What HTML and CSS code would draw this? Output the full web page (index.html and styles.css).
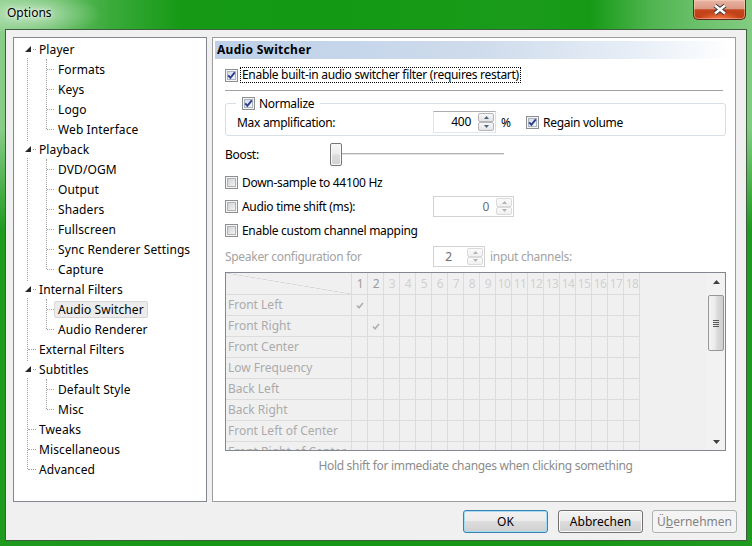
FILE: index.html
```html
<!DOCTYPE html>
<html lang="en">
<head>
<meta charset="utf-8">
<title>Options</title>
<link rel="stylesheet" href="styles.css">
</head>
<body>
<div class="window">
  <div class="titlebar">
    <div class="title">Options</div>
    <div class="close">
      <svg width="16" height="13" viewBox="0 0 16 13"><path d="M3 2.5 L13 10.5 M13 2.5 L3 10.5" stroke="#3d3d3d" stroke-width="4.4"/><path d="M3 2.5 L13 10.5 M13 2.5 L3 10.5" stroke="#ffffff" stroke-width="2.4"/></svg>
    </div>
  </div>
  <div class="client">
    <div class="panels">
      <div class="tree">
        <div class="roots">
          <div class="node">
            <div class="row root"><span class="exp"><svg width="6" height="6" viewBox="0 0 6 6"><path d="M6 0V6H0Z" fill="#262626"/></svg></span><span class="label">Player</span></div>
            <div class="kids">
              <div class="row kid"><span class="label">Formats</span></div>
              <div class="row kid"><span class="label">Keys</span></div>
              <div class="row kid"><span class="label">Logo</span></div>
              <div class="row kid"><span class="label">Web Interface</span></div>
            </div>
          </div>
          <div class="node">
            <div class="row root"><span class="exp"><svg width="6" height="6" viewBox="0 0 6 6"><path d="M6 0V6H0Z" fill="#262626"/></svg></span><span class="label">Playback</span></div>
            <div class="kids">
              <div class="row kid"><span class="label">DVD/OGM</span></div>
              <div class="row kid"><span class="label">Output</span></div>
              <div class="row kid"><span class="label">Shaders</span></div>
              <div class="row kid"><span class="label">Fullscreen</span></div>
              <div class="row kid"><span class="label">Sync Renderer Settings</span></div>
              <div class="row kid"><span class="label">Capture</span></div>
            </div>
          </div>
          <div class="node">
            <div class="row root"><span class="exp"><svg width="6" height="6" viewBox="0 0 6 6"><path d="M6 0V6H0Z" fill="#262626"/></svg></span><span class="label">Internal Filters</span></div>
            <div class="kids">
              <div class="row kid"><span class="label sel">Audio Switcher</span></div>
              <div class="row kid"><span class="label">Audio Renderer</span></div>
            </div>
          </div>
          <div class="row root"><span class="label">External Filters</span></div>
          <div class="node">
            <div class="row root"><span class="exp"><svg width="6" height="6" viewBox="0 0 6 6"><path d="M6 0V6H0Z" fill="#262626"/></svg></span><span class="label">Subtitles</span></div>
            <div class="kids">
              <div class="row kid"><span class="label">Default Style</span></div>
              <div class="row kid"><span class="label">Misc</span></div>
            </div>
          </div>
          <div class="row root"><span class="label">Tweaks</span></div>
          <div class="row root"><span class="label">Miscellaneous</span></div>
          <div class="row root"><span class="label">Advanced</span></div>
        </div>
      </div>

      <div class="panel">
        <div class="hdr">Audio Switcher</div>
        <div class="content">
          <div class="line r-enable">
            <span class="cb on fc"><svg width="13" height="13" viewBox="0 0 13 13"><path d="M3.2 6.3 L5.4 8.8 L9.8 3.4" fill="none" stroke="#2a3f8f" stroke-width="1.9"/></svg></span>
            <span class="focus">Enable built-in audio switcher filter (requires restart)</span>
          </div>
          <div class="sep"></div>
          <div class="group">
            <div class="legend">
              <span class="cb on"><svg width="13" height="13" viewBox="0 0 13 13"><path d="M3.2 6.3 L5.4 8.8 L9.8 3.4" fill="none" stroke="#2a3f8f" stroke-width="1.9"/></svg></span>
              <span>Normalize</span>
            </div>
            <div class="line h22">
              <span class="amp-lbl">Max amplification:</span>
              <div class="spin w63">
                <span class="val">400</span>
                <span class="sbtns">
                  <span class="sbtn"><svg width="5" height="3" viewBox="0 0 5 3"><path d="M0 3H5L2.5 0Z" fill="#4e5f83"/></svg></span>
                  <span class="sbtn"><svg width="5" height="3" viewBox="0 0 5 3"><path d="M0 0H5L2.5 3Z" fill="#4e5f83"/></svg></span>
                </span>
              </div>
              <span class="pct">%</span>
              <span class="cb on"><svg width="13" height="13" viewBox="0 0 13 13"><path d="M3.2 6.3 L5.4 8.8 L9.8 3.4" fill="none" stroke="#2a3f8f" stroke-width="1.9"/></svg></span>
              <span>Regain volume</span>
            </div>
          </div>
          <div class="line boost">
            <span class="boost-lbl">Boost:</span>
            <div class="slider"><span class="thumb"></span></div>
          </div>
          <div class="line r-down">
            <span class="cb"></span><span>Down-sample to 44100 Hz</span>
          </div>
          <div class="line r-shift">
            <span class="lbl208"><span class="cb"></span><span>Audio time shift (ms):</span></span>
            <div class="spin dis w81">
              <span class="val">0</span>
              <span class="sbtns">
                <span class="sbtn"><svg width="5" height="3" viewBox="0 0 5 3"><path d="M0 3H5L2.5 0Z" fill="#b3b3b3"/></svg></span>
                <span class="sbtn"><svg width="5" height="3" viewBox="0 0 5 3"><path d="M0 0H5L2.5 3Z" fill="#b3b3b3"/></svg></span>
              </span>
            </div>
          </div>
          <div class="line r-custom">
            <span class="cb"></span><span>Enable custom channel mapping</span>
          </div>
          <div class="line r-speaker">
            <span class="lbl208 grey">Speaker configuration for</span>
            <div class="spin dis w52 center">
              <span class="val">2</span>
              <span class="sbtns">
                <span class="sbtn"><svg width="5" height="3" viewBox="0 0 5 3"><path d="M0 3H5L2.5 0Z" fill="#b3b3b3"/></svg></span>
                <span class="sbtn"><svg width="5" height="3" viewBox="0 0 5 3"><path d="M0 0H5L2.5 3Z" fill="#b3b3b3"/></svg></span>
              </span>
            </div>
            <span class="grey inch">input channels:</span>
          </div>
          <div class="grid">
            <div class="gt">
              <div class="grow head">
                <div class="c0 diag"></div>
                <div class="cells nums">
                  <span class="on2">1</span><span class="on2">2</span><span>3</span><span>4</span><span>5</span><span>6</span><span>7</span><span>8</span><span>9</span><span>10</span><span>11</span><span>12</span><span>13</span><span>14</span><span>15</span><span>16</span><span>17</span><span>18</span>
                </div>
              </div>
              <div class="grow"><div class="c0">Front Left</div><div class="cells"><span class="tick"><svg width="8" height="7" viewBox="0 0 8 7"><path d="M1 3.5 L3 5.8 L7 1" fill="none" stroke="#aeaeae" stroke-width="1.6"/></svg></span></div></div>
              <div class="grow"><div class="c0">Front Right</div><div class="cells"><span class="tick col2"><svg width="8" height="7" viewBox="0 0 8 7"><path d="M1 3.5 L3 5.8 L7 1" fill="none" stroke="#aeaeae" stroke-width="1.6"/></svg></span></div></div>
              <div class="grow"><div class="c0">Front Center</div><div class="cells"></div></div>
              <div class="grow"><div class="c0">Low Frequency</div><div class="cells"></div></div>
              <div class="grow"><div class="c0">Back Left</div><div class="cells"></div></div>
              <div class="grow"><div class="c0">Back Right</div><div class="cells"></div></div>
              <div class="grow"><div class="c0">Front Left of Center</div><div class="cells"></div></div>
              <div class="grow"><div class="c0">Front Right of Center</div><div class="cells"></div></div>
            </div>
            <div class="sb">
              <div class="sb-btn"><svg width="7" height="4" viewBox="0 0 7 4"><path d="M0 4H7L3.5 0Z" fill="#404040"/></svg></div>
              <div class="sb-thumb"><svg width="6" height="7" viewBox="0 0 6 7"><path d="M0 0.5H6M0 2.5H6M0 4.5H6M0 6.5H6" stroke="#5a5a5a" stroke-width="1"/></svg></div>
              <div class="sb-fill"></div>
              <div class="sb-btn"><svg width="7" height="4" viewBox="0 0 7 4"><path d="M0 0H7L3.5 4Z" fill="#404040"/></svg></div>
            </div>
          </div>
          <div class="hint">Hold shift for immediate changes when clicking something</div>
        </div>
      </div>
    </div>
    <div class="buttons">
      <button class="btn ok">OK</button>
      <button class="btn cancel">Abbrechen</button>
      <button class="btn dis">Ü<u>b</u>ernehmen</button>
    </div>
  </div>
</div>
</body>
</html>
```

FILE: styles.css
```css
* { box-sizing: border-box; }
html, body { margin: 0; padding: 0; }
body {
  width: 752px;
  height: 546px;
  overflow: hidden;
  font-family: "Noto Sans", "Open Sans", sans-serif;
  font-size: 12px;
  color: #000;
}

.window {
  width: 752px;
  height: 546px;
  display: flex;
  flex-direction: column;
  background:
    radial-gradient(ellipse 70px 22px at 32px 14px, rgba(255,255,255,0.5), rgba(255,255,255,0) 100%),
    linear-gradient(180deg, rgba(22,150,22,0) 0px, rgba(22,150,22,0) 130px, rgba(22,150,22,0.92) 230px),
    linear-gradient(90deg, #88cd88 0px, #6cc06c 50px, #3aab3a 110px, #169a16 180px, #139913 330px, #1a9c1a 520px, #169a16 590px, #4fb44f 650px, #6cc16c 700px, #82cc82 752px);
}

.titlebar {
  height: 29px;
  display: flex;
  justify-content: space-between;
  align-items: flex-start;
}
.title {
  margin: 5px 0 0 7px;
  line-height: 16px;
  font-size: 12px;
  color: #000;
  text-shadow: 0 0 7px rgba(255,255,255,0.95), 0 0 3px rgba(255,255,255,0.8);
}
.close {
  width: 53px;
  height: 20px;
  margin-right: 6px;
  border: 1px solid #5a2a1c;
  border-top: none;
  border-radius: 0 0 5px 5px;
  background:
    radial-gradient(ellipse 22px 7px at 50% 100%, rgba(255,130,80,0.9), rgba(255,130,80,0)),
    linear-gradient(#e8b4a3, #db9a84 45%, #c3461d 52%, #c23d12 100%);
  box-shadow: inset 0 0 0 1px rgba(255,220,200,0.45);
  display: flex;
  align-items: center;
  justify-content: center;
}

.client {
  flex: 1;
  margin: 0 5px 5px;
  border: 1px solid #3e5f3e;
  background: #f0f0f0;
  padding: 7px 10px 7px 7px;
  display: flex;
  flex-direction: column;
}
.panels {
  height: 465px;
  display: flex;
  gap: 5px;
}

/* tree */
.tree {
  width: 194px;
  border: 1px solid #828790;
  background: #fff;
  padding-top: 1px;
}
.roots { position: relative; }
.roots::before {
  content: "";
  position: absolute;
  left: 13px;
  top: 10px;
  bottom: 10px;
  border-left: 1px dotted #a0a0a0;
}
.row {
  position: relative;
  height: 20px;
  display: flex;
  align-items: center;
}
.row::before {
  content: "";
  position: absolute;
  top: 10px;
  border-top: 1px dotted #a0a0a0;
}
.root { padding-left: 21px; }
.root::before { left: 14px; width: 8px; }
.kid { padding-left: 40px; }
.kid::before { left: 33px; width: 7px; }
.kids { position: relative; }
.kids::before {
  content: "";
  position: absolute;
  left: 32px;
  top: 0;
  bottom: 10px;
  border-left: 1px dotted #a0a0a0;
}
.exp {
  position: absolute;
  left: 6px;
  top: 2px;
  width: 12px;
  height: 16px;
  background: #fff;
  padding-left: 5px;
  display: flex;
  align-items: center;
}
.exp svg { display: block; }
.label {
  position: relative;
  border: 1px solid transparent;
  border-radius: 2px;
  padding: 0 3px;
  line-height: 15px;
  white-space: nowrap;
  letter-spacing: 0.1px;
}
.label.sel {
  background: #ececec;
  border-color: #d7d7d7;
}

/* right panel */
.panel {
  flex: 1;
  border: 1px solid #9d9d9d;
  background: #fff;
  display: flex;
  flex-direction: column;
}
.hdr {
  margin: 3px 2px 0;
  height: 18px;
  line-height: 18px;
  padding-left: 2px;
  font-weight: bold;
  letter-spacing: 0.3px;
  background: linear-gradient(90deg, #bdd0e8 0%, #cedbec 50%, #e6edf6 80%, #ffffff 100%);
}
.content { padding: 0 9px 0 12px; letter-spacing: -0.3px; }
.line { display: flex; align-items: center; white-space: nowrap; }

.cb {
  position: relative;
  flex: none;
  width: 13px;
  height: 13px;
  margin-right: 4px;
  border: 1px solid #8e8f8f;
  background: #f4f4f4;
}
.cb::before {
  content: "";
  position: absolute;
  left: 1px; top: 1px; right: 1px; bottom: 1px;
  border: 1px solid #b0b4b9;
  background: linear-gradient(135deg, #cfd2d6, #f4f4f4);
}
.cb.on::before {
  border-color: #a9b3c2;
  background: linear-gradient(135deg, #d5dbe6, #f7f8fa);
}
.cb svg { position: absolute; left: -1px; top: -1px; }
.cb.fc { margin-right: 2px; }

.r-enable { margin-top: 8px; height: 16px; }
.focus {
  border: 1px dotted #000;
  padding: 0 1px;
  line-height: 14px;
  height: 16px;
}
.sep {
  margin-top: 7px;
  margin-right: 3px;
  height: 1px;
  background: #a0a0a0;
}
.group {
  position: relative;
  margin-top: 12px;
  border: 1px solid #d5dfe5;
  border-radius: 3px;
  padding: 7px 0 2px 11px;
}
.legend {
  position: absolute;
  top: -7px;
  left: 10px;
  height: 13px;
  padding: 0 6px;
  background: #fff;
  display: flex;
  align-items: center;
  line-height: 13px;
}
.h22 { height: 22px; }
.amp-lbl { width: 196px; }

.spin {
  height: 22px;
  border: 1px solid;
  border-color: #abadb3 #dbdfe6 #e3e9ef #e2e3ea;
  background: #fff;
  display: flex;
  padding: 1px 1px 1px 0;
}
.spin .val {
  flex: 1;
  text-align: right;
  padding-right: 7px;
  line-height: 18px;
}
.spin.center .val { text-align: center; padding-right: 4px; padding-left: 0; }
.sbtns {
  width: 16px;
  display: flex;
  flex-direction: column;
}
.sbtn {
  flex: 1;
  border: 1px solid #b4b6ba;
  border-radius: 2px;
  background: linear-gradient(#f7f7f7, #e4e4e4);
  display: flex;
  align-items: center;
  justify-content: center;
}
.sbtn svg { display: block; }
.w63 { width: 63px; }
.w81 { width: 81px; height: 21px; }
.w52 { width: 52px; height: 21px; }
.spin.dis { border-color: #d2d2d2; }
.spin.dis .val { color: #6d6d6d; line-height: 17px; }
.spin.dis .sbtn { border-color: #dadada; background: linear-gradient(#fbfbfb, #f0f0f0); }
.pct { margin-left: 5px; width: 25px; }

.boost { margin-top: 7px; height: 23px; }
.boost-lbl { width: 100px; }
.slider {
  width: 180px;
  height: 23px;
  background:
    linear-gradient(#b2b2b2, #b2b2b2) 5px 10px / 174px 1px no-repeat,
    linear-gradient(#e4e4e4, #e4e4e4) 5px 11px / 174px 1px no-repeat;
}
.thumb {
  display: block;
  margin-left: 5px;
  width: 12px;
  height: 23px;
  border: 1px solid #767676;
  border-radius: 2px;
  background: linear-gradient(#f7f7f7, #ececec 45%, #dcdcdc 55%, #d2d2d2);
  box-shadow: inset 0 0 0 1px #fafafa;
}

.r-down { margin-top: 8px; height: 16px; }
.r-shift { margin-top: 6px; height: 21px; }
.lbl208 { width: 208px; display: flex; align-items: center; }
.r-custom { margin-top: 5px; height: 16px; }
.r-speaker { margin-top: 8px; height: 21px; }
.grey { color: #a3a3a3; }
.inch { margin-left: 5px; }

/* grid */
.grid {
  margin-top: 5px;
  height: 179px;
  border: 1px solid #828790;
  background: #f0f0f0;
  display: flex;
  overflow: hidden;
}
.gt { flex: 1; overflow: hidden; }
.grow { display: flex; height: 21px; }
.grow.head { height: 22px; }
.c0 {
  width: 126px;
  flex: none;
  border-right: 1px solid #dcdcdc;
  border-bottom: 1px solid #dcdcdc;
  padding-left: 2px;
  line-height: 20px;
  color: #ababab;
  letter-spacing: 0;
  white-space: nowrap;
  overflow: hidden;
}
.c0.diag {
  background: linear-gradient(to top right, rgba(0,0,0,0) calc(50% - 0.6px), #d2d2d2 50%, rgba(0,0,0,0) calc(50% + 0.6px));
}
.cells {
  width: 288px;
  flex: none;
  display: flex;
  border-bottom: 1px solid #dcdcdc;
  background: repeating-linear-gradient(90deg, rgba(0,0,0,0) 0 15px, #dcdcdc 15px 16px);
}
.nums span {
  width: 16px;
  flex: none;
  text-align: center;
  line-height: 21px;
  color: #d0d0d0;
  letter-spacing: -0.5px;
}
.nums span.on2 { color: #9c9c9c; }
.tick {
  width: 15px;
  display: flex;
  align-items: center;
  justify-content: center;
}
.tick.col2 { margin-left: 16px; }
.tick svg { display: block; }

.sb {
  width: 18px;
  display: flex;
  flex-direction: column;
  background: #f2f2f2;
}
.sb-btn {
  height: 17px;
  display: flex;
  align-items: center;
  justify-content: center;
}
.sb-thumb {
  margin: 5px 1px 0;
  height: 56px;
  border: 1px solid #979797;
  border-radius: 2px;
  background: linear-gradient(90deg, #f4f4f4, #eaeaea 45%, #dcdcdc 55%, #cecece);
  display: flex;
  align-items: center;
  justify-content: center;
}
.sb-fill { flex: 1; }

.hint {
  margin-top: 7px;
  height: 16px;
  line-height: 16px;
  text-align: center;
  color: #8c8c8c;
}

/* buttons */
.buttons {
  margin-top: 8px;
  margin-right: -1px;
  display: flex;
  justify-content: flex-end;
}
.btn {
  width: 85px;
  height: 23px;
  padding: 0;
  border: 1px solid #707070;
  border-radius: 3px;
  background: linear-gradient(#f2f2f2 0%, #ebebeb 49%, #dddddd 50%, #cfcfcf 100%);
  box-shadow: inset 0 0 0 1px #fbfbfb;
  font-family: "Noto Sans", "Open Sans", sans-serif;
  font-size: 12px;
  color: #000;
  line-height: 19px;
}
.btn.ok {
  border-color: #3c7fb1;
  box-shadow: inset 0 0 0 1px #a6dcf3;
}
.btn.cancel { margin-left: 10px; }
.btn.dis {
  margin-left: 9px;
  border-color: #adb2b5;
  background: #f4f4f4;
  box-shadow: none;
  color: #838383;
}
```
